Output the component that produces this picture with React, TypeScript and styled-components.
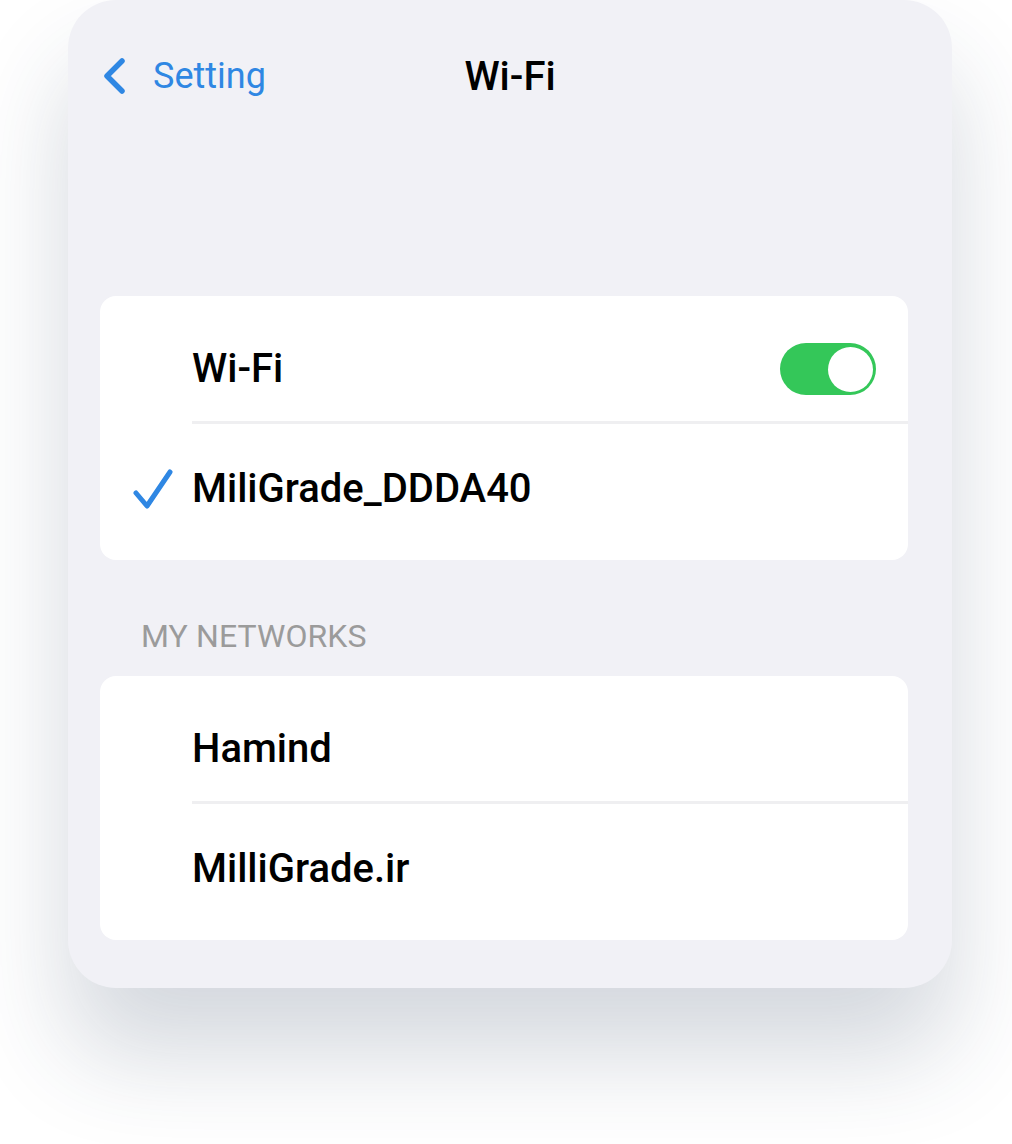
import React from "react";
import styled, { createGlobalStyle } from "styled-components";

const GlobalStyle = createGlobalStyle`
  html, body {
    margin: 0;
    padding: 0;
    background: #ffffff;
    font-family: Roboto, "Liberation Sans", Arial, sans-serif;
  }
`;

const Page = styled.div`
  width: 1012px;
  height: 1144px;
  padding-left: 68px;
  box-sizing: border-box;
  overflow: hidden;
`;

const Card = styled.div`
  width: 884px;
  height: 988px;
  box-sizing: border-box;
  background: #f1f1f6;
  border-radius: 48px;
  box-shadow: 0 66px 100px rgba(40, 60, 90, 0.2);
  display: flex;
  flex-direction: column;
`;

const Header = styled.div`
  height: 154px;
  display: grid;
  grid-template-columns: 1fr auto 1fr;
  align-items: center;
`;

const Back = styled.div`
  display: flex;
  align-items: center;
  gap: 24px;
  padding-left: 35px;
  color: #2f87e3;
  font-size: 36px;
  font-weight: 400;
  margin-top: -3px;
`;

const Title = styled.div`
  font-size: 40px;
  font-weight: 500;
  color: #000;
  line-height: 48px;
`;

const Content = styled.div`
  padding: 142px 44px 0 32px;
  display: flex;
  flex-direction: column;
`;

const Panel = styled.div`
  background: #ffffff;
  border-radius: 16px;
  display: flex;
  flex-direction: column;
  overflow: hidden;
`;

const Row = styled.div<{ $first?: boolean }>`
  display: grid;
  grid-template-columns: 92px 1fr auto;
  align-items: center;
  min-height: 52px;
  padding: ${(p) => (p.$first ? "47px 32px 26px 0" : "39px 32px 45px 0")};
`;

const Mark = styled.div`
  display: flex;
  align-items: center;
  padding-left: 33px;
  height: 52px;
`;

const Label = styled.div`
  font-size: 40px;
  font-weight: 500;
  color: #000;
  line-height: 48px;
`;

const Separator = styled.div`
  height: 3px;
  margin-left: 92px;
  background: #efeff1;
`;

const SectionTitle = styled.div`
  margin: 57px 0 21px 41px;
  font-size: 32px;
  line-height: 38px;
  font-weight: 400;
  color: #9b9b9b;
  letter-spacing: 0.1px;
`;

const Switch = styled.div<{ $on: boolean }>`
  width: 96px;
  height: 52px;
  border-radius: 26px;
  background: ${(p) => (p.$on ? "#34c759" : "#e5e5ea")};
  display: flex;
  align-items: center;
  justify-content: ${(p) => (p.$on ? "flex-end" : "flex-start")};
  padding: 3px;
  box-sizing: border-box;
`;

const Knob = styled.div`
  width: 45px;
  height: 45px;
  border-radius: 50%;
  background: #ffffff;
`;

const Chevron = () => (
  <svg width="26" height="38" viewBox="0 0 26 38">
    <polyline
      points="19,4 4,19 19,34"
      fill="none"
      stroke="#2f87e3"
      strokeWidth="5.5"
      strokeLinecap="round"
      strokeLinejoin="round"
    />
  </svg>
);

const Check = () => (
  <svg width="42" height="44" viewBox="0 0 42 44">
    <polyline
      points="3,26 14,39 37,5"
      fill="none"
      stroke="#2f87e3"
      strokeWidth="5"
      strokeLinecap="round"
      strokeLinejoin="round"
    />
  </svg>
);

export default function App() {
  return (
    <Page>
      <GlobalStyle />
      <Card>
        <Header>
          <Back>
            <Chevron />
            <span>Setting</span>
          </Back>
          <Title>Wi-Fi</Title>
          <div />
        </Header>
        <Content>
          <Panel>
            <Row $first>
              <Mark />
              <Label>Wi-Fi</Label>
              <Switch $on>
                <Knob />
              </Switch>
            </Row>
            <Separator />
            <Row>
              <Mark>
                <Check />
              </Mark>
              <Label>MiliGrade_DDDA40</Label>
              <span />
            </Row>
          </Panel>
          <SectionTitle>MY NETWORKS</SectionTitle>
          <Panel>
            <Row $first>
              <Mark />
              <Label>Hamind</Label>
              <span />
            </Row>
            <Separator />
            <Row>
              <Mark />
              <Label>MilliGrade.ir</Label>
              <span />
            </Row>
          </Panel>
        </Content>
      </Card>
    </Page>
  );
}
